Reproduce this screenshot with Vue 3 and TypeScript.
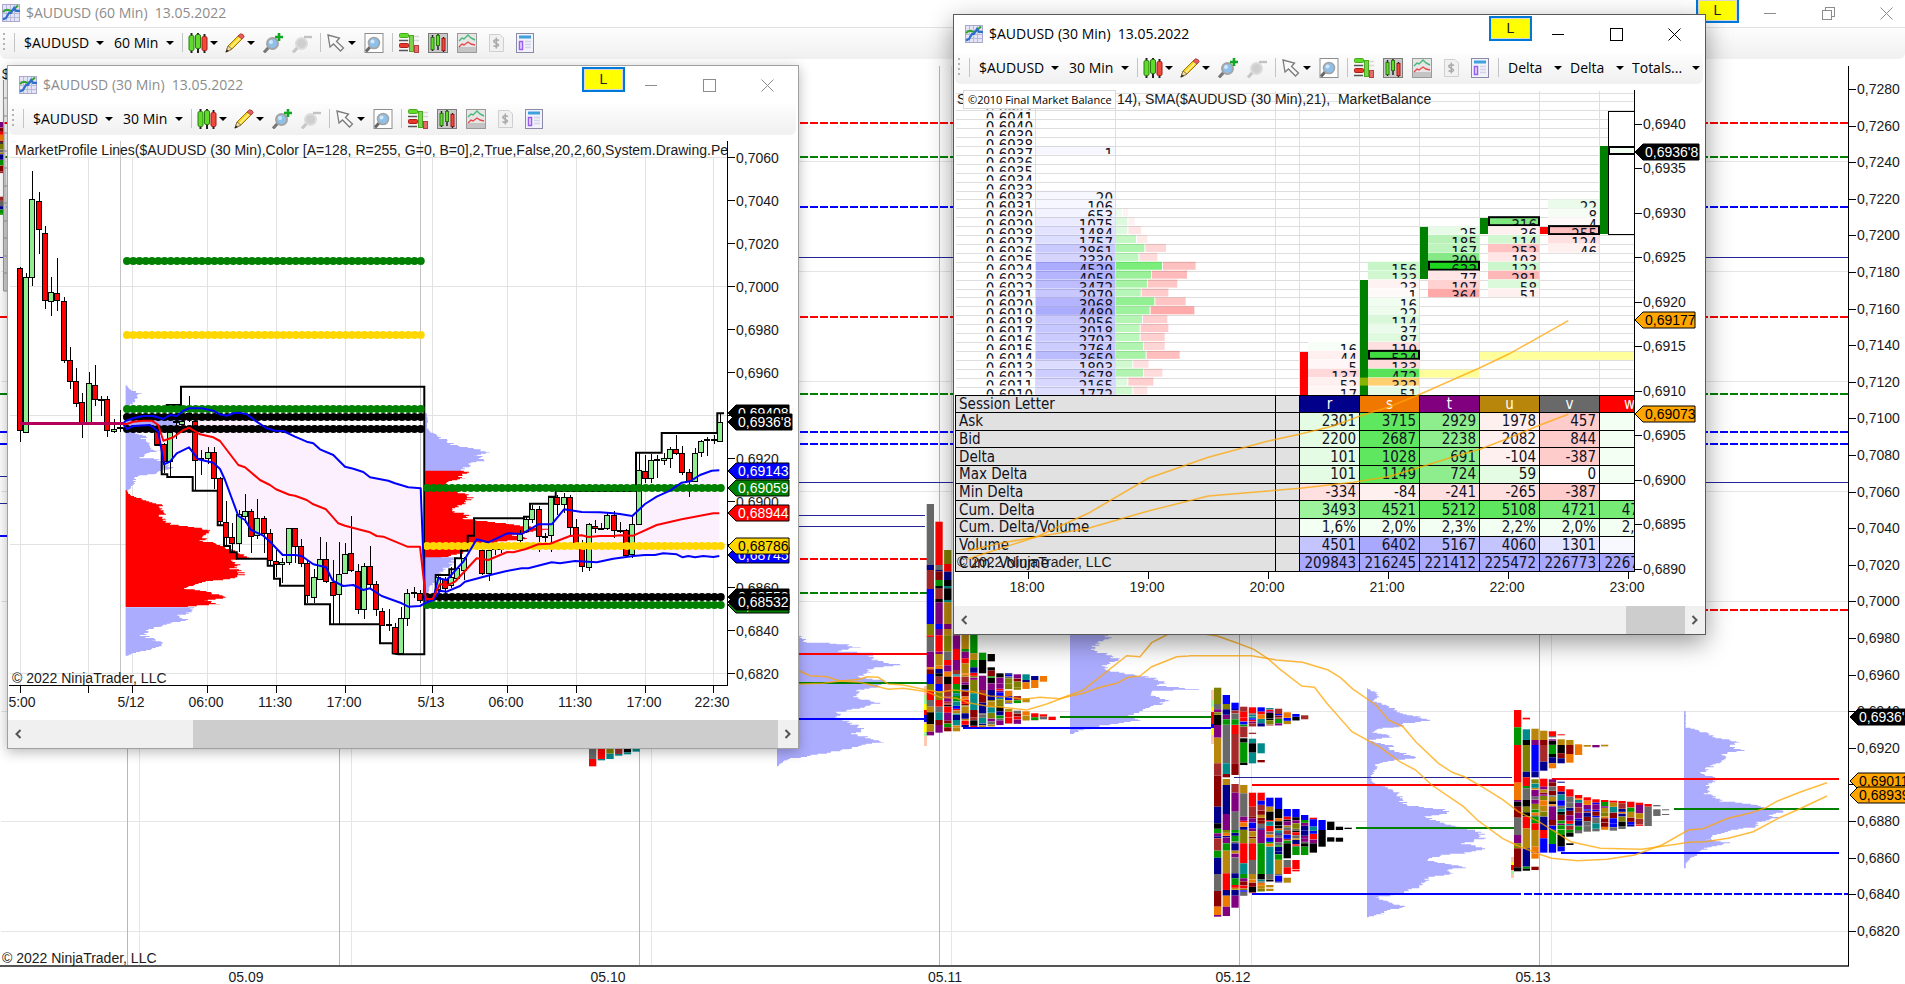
<script setup lang="ts">
type Pt = [number, number]
type Frame = [number, number, number, number]
interface Win { id: string; title: string; interval: string; active: boolean; extras: string[] }
interface Seg { x: number; y: number; h: number; c: string }
interface Tag { y: number; t: string; bg: string; fg: string; w: number; line: string }
interface Cell { x: number; y: number; t: string; c: string; box: boolean }

const windows: Win[] = [
  { id: 'main', title: '$AUDUSD (60 Min)\u00a0 13.05.2022', interval: '60 Min', active: false, extras: [] },
  { id: 'lines', title: '$AUDUSD (30 Min)\u00a0 13.05.2022', interval: '30 Min', active: false, extras: [] },
  { id: 'ladder', title: '$AUDUSD (30 Min)\u00a0 13.05.2022', interval: '30 Min', active: true, extras: ['Delta', 'Delta', 'Totals...'] },
]
const tools = [
  { k: 'candles', n: 'Chart style', caret: true }, { k: 'pencil', n: 'Drawing tools', caret: true },
  { k: 'zoomin', n: 'Zoom in' }, { k: 'zoomout', n: 'Zoom out' }, { k: 'sep', n: '' },
  { k: 'pointer', n: 'Cursor', caret: true }, { k: 'page', n: 'Zoom frame' }, { k: 'sep', n: '' },
  { k: 'dom', n: 'Chart trader' }, { k: 'box', n: 'Bars' }, { k: 'line', n: 'Indicators' },
  { k: 'dollar', n: 'Strategies' }, { k: 'panel', n: 'Properties' },
]

let seed = 7
function rnd(): number {
  seed = (seed * 1103515245 + 12345) % 2147483648
  return seed / 2147483648
}

/* Frames map plot units to page pixels: origin x, origin y, units per pixel in x and in y. */
const F: Record<string, Frame> = {
  mid: [760, 480, 3, 3],
  east: [1190, 630, 2.193, 3],
  s1: [0, 370, 3, 3],
  s0: [0, 130, 3, 3],
  s2: [400, 380, 3, 3],
  l1: [950, 220, 3, 3],
  l2: [1280, 220, 3, 3],
}
function at(f: Frame, x: number, y: number): Pt {
  return [Math.round((f[0] + x / f[2]) * 10) / 10, Math.round((f[1] + y / f[3]) * 10) / 10]
}
function trace(f: Frame, v: number[]): Pt[] {
  const out: Pt[] = []
  for (let i = 0; i < v.length; i += 2) out.push(at(f, v[i], v[i + 1]))
  return out
}
function poly(p: Pt[]): string { return p.map(q => q.join(',')).join(' ') }

function profile(x0: number, f: Frame, v: number[], jitter = 4): string {
  const p = trace(f, v)
  let d = `M${x0} ${p[0][1]}`
  for (let i = 0; i < p.length - 1; i++) {
    const [ax, ay] = p[i], [bx, by] = p[i + 1]
    for (let y = ay; y < by; y += 1) {
      const w = ax + ((bx - ax) * (y - ay)) / (by - ay)
      const j = (rnd() - 0.5) * Math.min(jitter * 2, (w - x0) * 0.4)
      d += `H${Math.max(x0 + 1, w + j).toFixed(1)}V${(y + 1).toFixed(1)}`
    }
  }
  return d + `H${x0}Z`
}

const COL: Record<string, string> = {
  g: '#696969', r: '#ff0000', o: '#808000', n: '#00008b', b: '#0000ff', G: '#009600', k: '#000000',
  w: '#a52a2a', d: '#8b0000', p: '#800080', y: '#b8860b', t: '#008b8b', O: '#f07800',
}
const KEYS = Object.keys(COL)
function tpo(f: Frame, x0: number, cols: string[]): Seg[] {
  const out: Seg[] = []
  cols.forEach((c, i) => {
    const tok = c.split(' ')
    const x = x0 + i * 8.7
    let y = Number(tok[0])
    for (const t of tok.slice(1)) {
      const end = Number(t.slice(1))
      const k = t[0]
      if (k === '*') {
        while (y < end) {
          const h = Math.min(end - y, 5 + Math.floor(rnd() * 4) * 4)
          out.push({ x, y: at(f, 0, y)[1], h: h / 3 - 0.2, c: COL[KEYS[Math.floor(rnd() * KEYS.length)]] })
          y += h
        }
      } else if (k !== '-') {
        out.push({ x, y: at(f, 0, y)[1], h: (end - y) / 3, c: COL[k] })
      }
      y = end
    }
  })
  return out
}

/* ---------- 60 minute chart ---------- */
const mainPrices = Array.from({ length: 24 }, (_, i) => ({ y: 89 + i * 36.6, t: '0,' + (7280 - i * 20) }))
const mainDays = [{ x: 246, t: '05.09' }, { x: 608, t: '05.10' }, { x: 945, t: '05.11' }, { x: 1233, t: '05.12' }, { x: 1533, t: '05.13' }]
const mainRows = [161, 271, 381, 491, 601, 711, 821, 931]
const mainCols = [127, 339, 639, 939, 1239, 1539]
const RED = '#ff0000', GRN = '#008000', BLU = '#0000ff', NAV = '#24249a'
const levels = [
  { y: 123, a: 0, b: 1848, c: RED, d: 1 }, { y: 157, a: 0, b: 1848, c: GRN, d: 1 }, { y: 207, a: 0, b: 1848, c: BLU, d: 1 },
  { y: 257, a: 0, b: 1848, c: NAV, d: 2 }, { y: 317, a: 0, b: 1848, c: RED, d: 1 }, { y: 394, a: 0, b: 1848, c: GRN, d: 1 },
  { y: 432, a: 0, b: 1848, c: BLU, d: 1 }, { y: 444, a: 0, b: 1848, c: BLU, d: 1 }, { y: 482, a: 700, b: 1848, c: NAV, d: 2 },
  { y: 476, a: 0, b: 20, c: NAV, d: 2 }, { y: 503, a: 0, b: 20, c: NAV, d: 2 }, { y: 536, a: 0, b: 20, c: BLU, d: 1 },
  { y: 515, a: 700, b: 925, c: NAV, d: 2 }, { y: 526, a: 700, b: 925, c: NAV, d: 2 },
  { y: 559, a: 700, b: 927, c: RED, d: 1 }, { y: 593, a: 700, b: 927, c: GRN, d: 1 }, { y: 610, a: 1600, b: 1848, c: RED, d: 1 },
  { y: 654, a: 700, b: 927, c: RED, d: 0 }, { y: 683, a: 700, b: 927, c: GRN, d: 0 }, { y: 719, a: 700, b: 927, c: BLU, d: 0 },
  { y: 717, a: 1060, b: 1213, c: GRN, d: 0 }, { y: 728, a: 963, b: 1213, c: BLU, d: 0 },
  { y: 777, a: 1234, b: 1512, c: NAV, d: 2 }, { y: 785, a: 1252, b: 1515, c: RED, d: 0 }, { y: 828, a: 1356, b: 1515, c: GRN, d: 0 },
  { y: 894, a: 1252, b: 1521, c: BLU, d: 0 }, { y: 894, a: 1524, b: 1848, c: BLU, d: 1 },
  { y: 779, a: 1552, b: 1839, c: RED, d: 0 }, { y: 809, a: 1674, b: 1839, c: GRN, d: 0 }, { y: 853, a: 1561, b: 1839, c: BLU, d: 0 },
]
const mainProfiles = [
  profile(777, F.mid, [122, 468, 130, 485, 240, 490, 290, 500, 245, 512, 330, 518, 345, 540, 420, 553, 335, 562, 330, 575, 290, 590, 380, 600, 350, 620, 300, 628, 290, 650, 350, 668, 310, 680, 240, 695, 230, 710, 260, 722, 290, 735, 310, 748, 285, 760, 360, 785, 300, 795, 260, 805, 210, 815, 150, 825, 90, 835, 60, 850, 54, 858]),
  profile(1070, F.mid, [1000, 430, 1050, 475, 1010, 485, 1000, 510, 1035, 520, 1060, 532, 1085, 540, 1040, 550, 1035, 565, 1060, 572, 1100, 580, 1165, 590, 1200, 598, 1215, 608, 1200, 615, 1305, 626, 1185, 632, 1170, 645, 1225, 658, 1200, 672, 1145, 690, 1110, 703, 1130, 720, 1060, 730, 1010, 737, 1000, 742, 960, 750, 935, 762]),
  profile(1367, F.east, [390, 175, 412, 190, 415, 200, 400, 212, 425, 222, 450, 235, 470, 250, 500, 260, 520, 270, 470, 280, 455, 290, 410, 295, 400, 305, 425, 310, 440, 320, 390, 330, 440, 345, 445, 360, 480, 375, 490, 383, 440, 390, 410, 400, 405, 420, 395, 440, 405, 460, 440, 475, 460, 490, 460, 510, 480, 525, 560, 537, 560, 550, 520, 558, 545, 575, 600, 590, 640, 605, 640, 625, 600, 640, 645, 655, 600, 668, 545, 675, 520, 690, 560, 700, 605, 712, 560, 718, 580, 728, 520, 740, 515, 760, 490, 775, 470, 790, 410, 800, 430, 815, 470, 828, 440, 840, 420, 850, 388, 860]),
  profile(1684, F.east, [1087, 243, 1087, 290, 1110, 298, 1140, 310, 1160, 325, 1210, 335, 1180, 345, 1215, 360, 1170, 370, 1180, 385, 1150, 400, 1130, 420, 1125, 432, 1160, 445, 1130, 462, 1145, 475, 1130, 490, 1150, 500, 1170, 512, 1240, 522, 1270, 532, 1310, 542, 1270, 555, 1290, 562, 1250, 572, 1235, 590, 1190, 600, 1150, 612, 1140, 625, 1180, 637, 1140, 650, 1120, 662, 1110, 675, 1095, 688, 1087, 700, 1087, 715]),
]
const letters: Seg[] = [
  ...tpo(F.mid, 926.7, [
    '72 g255 n270 w327 b432 o466 r471 g515 p562 O568 d582 b612 o632 r660 g680 y697 k733 y755 p766',
    '125 r255 g270 n274 d300 G318 k326 w357 k367 p432 b447 p466 r515 p522 y557 O567 n580 k590 w612 b634 o660 r680 g697 t720 d735 p758',
    '210 o252 r275 n300 k318 t325 k360 t367 y432 p447 y466 o515 g540 r556 p575 O590 k612 w650 p665 *680 r698 p722 *742 d754',
    '455 y466 p507 r540 p570 *590 r612 G640 t648 *705 n720 *742 y754',
    '440 y507 G515 p535 r550 y580 *615 k628 *680 y700 *742',
    '440 G520 y540 G562 *600 o640 t690 d712 *742',
    '518 G540 k580 -587 p630 w640 d668 n700 *742',
    '522 k544 -562 k572 *610 p630 n660 *740',
    '580 *658 o672 *736',
    '580 *628 -632 O648 *672 -687 *732',
    '583 *630 -648 *670 -692 *732',
    '583 t600 n607 O627 -655 y667 -694 *722',
    '588 n600 O624 -700 r712 *722',
    '588 O605 -703 r710 g718',
    '710 r720',
  ]),
  ...tpo(F.east, 1214, [
    '173 o222 g238 *255 k285 p323 y400 w437 d530 n580 *625 w662 G683 n732 g783 d830 O855 p860',
    '195 b222 o238 *285 g400 t432 d442 -447 y465 n552 p600 *640 G662 y730 r780 n797 O830 p858',
    '218 b237 *285 r312 w400 d435 -462 w488 p545 g600 *640 n662 *683 g730 n745 G765 *780 n797 p833',
    '230 w245 *290 w322 -325 k338 G398 k405 -465 y490 g560 *600 o640 r700 t732 G745 *798',
    '232 r250 *290 -308 w312 -326 t340 k368 t400 -488 r530 w560 *640 r690 g732 *790',
    '232 b245 *290 -340 t370 -390 d397 -488 r512 *600 p640 G732 *785',
    '234 *287 -503 b530 y545 k570 *650 t732 *755 -765 y772 -776 y783',
    '236 w252 *287 -503 b537 k565 *690 y732 *758',
    '247 *283 -537 b560 *640 k685 -690 g712 r732 -743 y758',
    '252 *272 -537 b562 *650 G675 -690 r718 -720 r724',
    '256 w268 -555 b570 *640 k650 G675',
    '563 r568 b590 *640 k668',
    '570 b600 k650',
    '575 k600 -622 k635',
    '590 k600 -623 k635',
    '593 k597',
  ]),
  ...tpo(F.east, 1514, [
    '240 r292 G345 r458 O510 p515 k530 d563 g615 p640 o655 d712 k724',
    '263 r268 -298 t330 k345 o425 n442 r468 G475 g510 k530 *560 r595 y655 n710 G716 k722',
    '296 y330 p345 b425 n442 -448 *480 p500 *560 G580 r600 y650 *670 O686 -710 d720',
    '302 y330 d345 w395 n422 -446 r470 *560 n600 r625 b668',
    '304 r318 g322 -328 *345 G372 k382 n400 O415 -448 *530 p570 *600 G642 b668',
    '313 r316 -328 y345 k370 d385 n400 -455 n458 -468 r485 *600 G615 k650 b664',
    '330 y345 d372 O398 -478 r500 *600 G608 k620 -640 k645',
    '343 O375 -495 r505 *590 G600 g610',
    '345 y350 -502 r512 *590 g605',
    '345 p352 -508 r518 *597 g604',
    '344 y349 -510 r516 *600',
    '512 r518 *592 g602',
    '513 r520 *575 k588 g597',
    '515 r528 *590',
    '518 r525 p550 *588',
    '522 r530 g588',
    '525 g529 -538 g558',
    '538 g541 -552 g555',
  ]),
  ...tpo([0, 749, 3, 3], 589, ['-20 g30 r52', '-20 r30 t34', '-20 o14 t30', '-20 w15 t20', '-20 k10 t16', '-20 t8']),
]
const scraps: Seg[] = tpo(F.s0, -4, ['-24 *130']).concat(tpo(F.s0, -4, ['200 *255']))
const zones = [
  [924, 686, 60, '#ffc8b0'], [924, 695, 10, '#98fb98'], [924, 704, 6, '#ffff00'], [924, 710, 5, RED], [924, 715, 7, BLU], [924, 724, 8, '#ffff00'], [924, 732, 4, '#98fb98'],
  [1211, 690, 54, '#ffc8b0'], [1211, 700, 8, '#98fb98'], [1211, 707, 4, '#ffff00'], [1211, 712, 12, RED], [1211, 724, 6, BLU], [1211, 728, 7, '#ffff00'],
  [1511, 857, 21, '#ffc8b0'], [1511, 862, 4, '#ffff00'], [1511, 865, 5, RED], [1511, 871, 3, '#98fb98'],
] as [number, number, number, string][]
const mainAverages = [
  poly([...trace(F.mid, [100, 565, 150, 587, 200, 590, 240, 603, 300, 598, 320, 590, 355, 592, 385, 612, 430, 615, 500, 630, 540, 637, 580, 630, 640, 635, 690, 648, 740, 650, 790, 658, 840, 652, 900, 656, 930, 645, 970, 630, 1100, 527, 1140, 530, 1175, 488, 1225, 462]),
    ...trace(F.east, [0, 6, 20, 10, 60, 18, 105, 40, 140, 58, 170, 85, 195, 115, 245, 168, 273, 172, 300, 220, 355, 305, 415, 350, 460, 395, 495, 420, 530, 465, 600, 530, 630, 570, 685, 625, 715, 645, 765, 672, 793, 685, 850, 692, 915, 688, 975, 675, 1035, 645, 1093, 600, 1125, 596, 1180, 565, 1230, 548, 1260, 535, 1290, 512, 1340, 485, 1397, 458])]),
  poly([...trace(F.mid, [100, 613, 190, 610, 240, 603, 300, 607, 385, 628, 430, 625, 500, 635, 540, 652, 590, 655, 625, 668, 680, 678, 740, 683, 800, 690, 860, 672, 910, 653, 970, 640, 1020, 622, 1070, 610, 1105, 592, 1140, 588, 1175, 560, 1250, 530, 1285, 528]),
    ...trace(F.east, [0, 77, 135, 77, 190, 90, 247, 97, 303, 120, 330, 143, 358, 178, 408, 225, 435, 270, 467, 290, 495, 335, 545, 400, 575, 427, 603, 441, 640, 470, 685, 508, 720, 545, 765, 575, 800, 605, 835, 635, 900, 655, 990, 658, 1040, 648, 1095, 637, 1130, 635, 1180, 625, 1235, 605, 1290, 565, 1340, 535, 1397, 498])]),
]
const mainTags: Tag[] = [
  { y: 717, t: "0,6936'8", bg: '#000', fg: '#fff', w: 66, line: '#000' },
  { y: 781, t: '0,69011', bg: '#ffa500', fg: '#000', w: 62, line: '#000' },
  { y: 795, t: '0,68939', bg: '#ffa500', fg: '#000', w: 62, line: '#000' },
]
function tagShape(x: number, t: Tag): string {
  return `M${x} ${t.y}l8 -8H${x + t.w}V${t.y + 8}H${x + 8}Z`
}

/* ---------- 30 minute chart with profile lines ---------- */
const linePrices = Array.from({ length: 13 }, (_, i) => ({ y: 157.5 + i * 43, t: '0,' + (7060 - i * 20) }))
const lineTimes = [[22, '5:00', 20], [88, '', 88], [131, '5/12', 132], [206, '06:00', 207], [275, '11:30', 276], [344, '17:00', 345], [431, '5/13', 432], [506, '06:00', 507], [575, '11:30', 576], [644, '17:00', 645], [712, '22:30', 713]] as [number, string, number][]
const dotLines = [
  { y: 261, a: 127, b: 421, c: '#008000' }, { y: 335, a: 127, b: 421, c: '#ffd700' },
  { y: 417, a: 127, b: 421, c: '#000' }, { y: 429, a: 127, b: 421, c: '#000' }, { y: 409, a: 127, b: 421, c: '#008000' },
  { y: 597, a: 427, b: 721, c: '#000' }, { y: 605, a: 427, b: 721, c: '#008000' },
  { y: 488, a: 427, b: 721, c: '#008000' }, { y: 546, a: 427, b: 721, c: '#ffd700' },
]
const lineProfiles = [
  { c: '#acacff', d: profile(125.6, F.s1, [380, 46, 395, 60, 417, 68, 412, 85, 400, 97, 388, 105, 385, 110, 400, 138, 540, 150, 535, 172, 400, 185, 430, 195, 435, 212, 450, 230, 470, 240, 430, 255, 425, 262, 470, 267, 490, 275, 500, 285, 525, 293, 485, 300, 455, 310, 415, 315, 405, 330, 395, 350, 382, 360]) },
  { c: '#ff0000', d: profile(125.6, F.s1, [380, 360, 390, 375, 430, 385, 475, 400, 480, 415, 490, 425, 480, 440, 500, 455, 530, 465, 575, 470, 630, 478, 620, 490, 610, 510, 650, 522, 680, 535, 720, 550, 745, 560, 700, 570, 715, 580, 700, 595, 728, 607, 715, 622, 640, 630, 580, 645, 560, 655, 610, 660, 640, 670, 680, 680, 625, 690, 650, 700, 570, 708, 555, 711]) },
  { c: '#acacff', d: profile(125.6, F.s1, [580, 712, 565, 725, 540, 735, 560, 750, 520, 755, 480, 768, 440, 780, 430, 795, 460, 808, 490, 820, 480, 828, 430, 840, 400, 848, 380, 857]) },
  { c: '#acacff', d: profile(425.2, F.s2, [80, 100, 83, 120, 80, 140, 92, 155, 110, 165, 145, 183, 170, 198, 235, 205, 260, 215, 230, 225, 255, 238, 215, 250, 200, 262, 190, 272]) },
  { c: '#ff0000', d: profile(425.2, F.s2, [190, 272, 210, 275, 180, 285, 190, 292, 165, 300, 140, 310, 165, 325, 190, 340, 212, 352, 195, 370, 150, 385, 170, 395, 210, 405, 180, 415, 230, 420, 320, 430, 390, 440, 450, 446, 380, 455, 340, 465, 385, 475, 280, 485, 270, 495, 190, 500, 200, 515, 160, 525, 130, 532]) },
  { c: '#acacff', d: profile(425.2, F.s2, [165, 532, 160, 545, 140, 560, 120, 580, 105, 600, 90, 620, 82, 640]) },
]
const upper1 = trace(F.s1, [60, 160, 370, 160, 378, 152, 400, 145, 430, 138, 460, 138, 490, 147, 510, 135, 530, 138, 550, 122, 568, 115, 605, 115, 640, 122, 660, 133, 680, 137, 700, 130, 718, 128, 740, 133, 770, 155, 800, 175, 825, 182, 850, 183, 885, 200, 920, 215, 940, 220, 960, 238, 1000, 255, 1035, 290, 1060, 296, 1090, 306, 1110, 322, 1165, 332, 1185, 340, 1225, 352, 1262, 355, 1275, 690])
const upper2 = trace(F.s2, [75, 660, 100, 655, 115, 595, 140, 600, 190, 545, 230, 478, 265, 487, 322, 460, 365, 462, 415, 433, 455, 433, 492, 388, 545, 396, 600, 397, 640, 400, 660, 402, 697, 408, 735, 372, 770, 350, 810, 332, 845, 308, 870, 304, 900, 285, 935, 272, 958, 271])
const lower1 = trace(F.s1, [370, 162, 380, 177, 400, 168, 450, 165, 475, 185, 492, 283, 510, 275, 530, 250, 567, 232, 595, 268, 640, 278, 660, 297, 675, 330, 715, 438, 735, 450, 753, 480, 790, 497, 810, 515, 848, 555, 885, 555, 905, 558, 940, 583, 978, 592, 998, 632, 1030, 648, 1060, 645, 1090, 660, 1110, 655, 1145, 678, 1205, 700, 1225, 710, 1260, 708])
const lower2 = trace(F.s2, [78, 668, 100, 660, 120, 632, 140, 635, 180, 618, 195, 605, 240, 593, 280, 583, 320, 573, 365, 565, 385, 565, 455, 547, 480, 550, 525, 543, 590, 547, 640, 536, 700, 528, 735, 525, 765, 525, 790, 520, 830, 523, 848, 532, 865, 528, 885, 532, 910, 528, 940, 531, 958, 528])
const middle = poly([...trace(F.s1, [60, 160, 380, 162, 400, 155, 430, 152, 455, 152, 475, 165, 490, 212, 520, 202, 550, 180, 567, 173, 600, 193, 640, 202, 660, 213, 715, 285, 735, 292, 780, 330, 810, 345, 828, 358, 868, 374, 885, 377, 920, 390, 940, 403, 978, 418, 1015, 460, 1035, 467, 1075, 478, 1110, 487, 1130, 498, 1150, 500, 1222, 530, 1260, 530, 1278, 690]),
  ...trace(F.s2, [80, 657, 98, 657, 120, 612, 140, 617, 165, 605, 230, 535, 265, 540, 322, 516, 340, 517, 375, 508, 415, 493, 450, 491, 510, 468, 545, 466, 565, 471, 600, 468, 640, 468, 660, 466, 700, 467, 770, 435, 845, 418, 940, 400, 958, 400])])
const upperLine = poly([...upper1, ...upper2])
const lowerLine = poly([...lower1, ...lower2])
const band = poly([...upper1.slice(1), ...upper2, ...[...lower1, ...lower2].reverse()])
const steps = [
  poly(trace(F.s1, [500, 125, 500, 105, 543, 105, 543, 50, 1273, 50, 1273, 853, 1195, 853, 1178, 850, 1178, 820, 1140, 820, 1140, 763, 990, 763, 990, 703, 915, 703, 915, 647, 840, 647, 840, 626, 822, 626, 822, 587, 803, 587, 803, 566, 710, 566, 710, 547, 690, 547, 690, 528, 672, 528, 672, 466, 653, 466, 653, 362, 578, 362, 578, 321, 502, 321, 502, 313, 485, 313, 485, 225, 466, 225, 466, 180])),
  poly(trace(F.s2, [75, 655, 100, 650, 107, 650, 107, 585, 148, 585, 148, 568, 165, 568, 165, 535, 183, 535, 183, 512, 203, 512, 203, 467, 222, 467, 222, 415, 372, 415, 372, 410, 390, 410, 390, 371, 447, 371, 447, 350, 467, 350, 467, 333, 708, 333, 708, 218, 785, 218, 785, 159, 952, 159, 952, 100, 972, 100])),
]
const U = 1, D = 0
function candles(f: Frame, v: number[][]) {
  return v.map(([x, hi, a, b, lo, up]) => ({
    x: Math.round(f[0] + x / 3), hi: f[1] + hi / 3, lo: f[1] + lo / 3,
    y: Math.round(f[1] + a / 3), h: Math.max(1, Math.round((b - a) / 3)), up: up === U,
  }))
}
const bars = [
  ...candles(F.s0, [[60, 410, 415, 902, 937, D], [78, 428, 441, 905, 910, U], [97, 122, 208, 441, 468, U], [116, 185, 212, 296, 371, D], [134, 287, 310, 512, 536, D], [153, 440, 486, 512, 558, U], [172, 383, 490, 512, 544, D], [191, 500, 512, 690, 698, D], [209, 650, 690, 752, 776, D], [228, 713, 752, 817, 832, D], [247, 790, 817, 880, 923, D], [266, 725, 760, 880, 880, U], [285, 706, 764, 805, 828, D], [303, 797, 808, 809, 857, D], [322, 797, 808, 902, 922, D], [341, 868, 896, 902, 910, U], [360, 840, 890, 893, 905, D]]),
  ...candles(F.s1, [[472, 170, 180, 223, 225, D], [491, 220, 223, 275, 310, D], [510, 180, 187, 275, 318, U], [529, 150, 152, 155, 208, D], [545, 150, 152, 160, 160, U], [566, 77, 130, 133, 155, D], [585, 147, 152, 268, 362, D], [604, 240, 265, 268, 315, D], [623, 230, 247, 265, 282, U], [641, 230, 247, 325, 357, D], [660, 320, 325, 455, 466, D], [679, 392, 455, 501, 528, D], [697, 460, 501, 520, 545, D], [716, 420, 433, 520, 547, U], [735, 373, 423, 437, 458, U], [754, 418, 423, 497, 550, D], [772, 388, 445, 497, 507, U], [791, 437, 445, 490, 550, D], [810, 478, 490, 572, 585, D], [828, 540, 572, 580, 622, D], [847, 565, 577, 583, 640, U], [866, 475, 475, 577, 585, U], [885, 475, 475, 530, 580, D], [904, 507, 528, 580, 590, D], [922, 570, 580, 677, 700, D], [941, 598, 622, 682, 700, U], [960, 500, 568, 628, 630, U], [978, 515, 568, 635, 640, D], [998, 570, 635, 673, 763, D], [1016, 515, 613, 673, 763, U], [1035, 518, 553, 610, 612, U], [1054, 437, 550, 602, 605, D], [1073, 583, 602, 715, 733, D], [1091, 580, 587, 715, 747, U], [1110, 527, 587, 640, 655, D], [1129, 632, 643, 718, 738, D], [1147, 715, 722, 763, 765, D], [1166, 718, 763, 766, 783, D], [1185, 760, 772, 850, 853, D], [1203, 710, 745, 850, 852, U], [1222, 658, 670, 745, 768, U], [1241, 650, 666, 668, 685, D], [1260, 660, 670, 692, 700, D]]),
  ...candles(F.s2, [[115, 585, 590, 625, 640, U], [135, 590, 598, 625, 640, D], [153, 560, 590, 615, 625, U], [172, 560, 565, 595, 600, U], [191, 530, 535, 570, 600, U], [247, 505, 510, 580, 585, D], [266, 500, 510, 580, 603, U], [285, 495, 505, 508, 525, D], [303, 490, 505, 508, 520, D], [360, 450, 458, 480, 490, U], [378, 410, 418, 455, 460, U], [397, 375, 388, 418, 430, U], [416, 378, 388, 470, 515, D], [434, 460, 467, 470, 495, D], [453, 350, 352, 467, 515, U], [472, 345, 352, 373, 405, D], [491, 338, 352, 373, 400, U], [509, 345, 352, 441, 465, D], [528, 418, 441, 488, 490, D], [547, 480, 505, 560, 577, D], [566, 430, 433, 562, 573, U], [585, 420, 437, 444, 460, D], [603, 430, 443, 445, 447, D], [622, 400, 406, 444, 450, U], [641, 392, 406, 450, 475, D], [660, 427, 450, 453, 460, D], [679, 447, 449, 523, 527, D], [697, 410, 433, 523, 535, U], [716, 220, 271, 433, 435, U], [735, 225, 272, 293, 310, D], [753, 222, 241, 295, 310, U], [772, 225, 238, 241, 295, D], [791, 220, 235, 241, 255, U], [810, 200, 208, 235, 265, U], [829, 165, 208, 219, 225, D], [847, 198, 219, 275, 285, D], [866, 268, 275, 302, 352, D], [885, 205, 219, 302, 302, U], [904, 180, 182, 215, 232, U], [922, 172, 178, 181, 228, D], [941, 165, 178, 181, 193, D], [960, 100, 126, 182, 185, U]]),
]
const lineTags: Tag[] = [
  { y: 413, t: '0,69408', bg: '#000', fg: '#fff', w: 61, line: '#000' },
  { y: 422, t: "0,6936'8", bg: '#000', fg: '#fff', w: 64, line: '#000' },
  { y: 471, t: '0,69143', bg: '#0000ff', fg: '#fff', w: 61, line: '#000' },
  { y: 488, t: '0,69059', bg: '#008000', fg: '#fff', w: 61, line: '#000' },
  { y: 513, t: '0,68944', bg: '#ff0000', fg: '#fff', w: 61, line: '#000' },
  { y: 555, t: '0,68745', bg: '#0000ff', fg: '#fff', w: 61, line: '#000' },
  { y: 546, t: '0,68786', bg: '#ffd700', fg: '#000', w: 61, line: '#000' },
  { y: 597, t: '0,68553', bg: '#000', fg: '#fff', w: 61, line: '#000' },
  { y: 605, t: '0,68510', bg: '#008000', fg: '#fff', w: 61, line: '#000' },
  { y: 602, t: '0,68532', bg: '#000', fg: '#fff', w: 61, line: '#000' },
]

/* ---------- 30 minute ladder ---------- */
const STEP = 8.91
const rowTop = (p: number) => 119.2 + (6940 - p) * STEP
const ladderRows = Array.from({ length: 33 }, (_, i) => 6942 - i).map(p => ({ y: rowTop(p), t: '0,' + p }))
const ladderGrid = Array.from({ length: 35 }, (_, i) => Math.round(92.5 + i * STEP))
const ladderCols = [1035, 1115, 1275, 1299, 1359, 1419, 1479, 1539, 1599]
const volumes = ([[6937, 1, 0, 0], [6932, 20, 0, 0], [6931, 106, 0, 0], [6930, 653, 516, 534], [6929, 1075, 532, 554], [6928, 1484, 532, 573], [6927, 1757, 558, 592], [6926, 2861, 583, 648], [6925, 2330, 565, 622], [6924, 4529, 636, 737], [6923, 4050, 603, 711], [6922, 3472, 591, 682], [6921, 2979, 572, 655], [6920, 3968, 613, 707], [6919, 4489, 599, 733], [6918, 2956, 576, 652], [6917, 3018, 569, 655], [6916, 2792, 569, 644], [6915, 2764, 579, 644], [6914, 3650, 587, 689], [6913, 1893, 547, 596], [6912, 2678, 579, 637], [6911, 2165, 532, 610], [6910, 1772, 547, 592]] as number[][])
  .map(([p, v, g, r]) => ({
    y: rowTop(p), t: String(v), a: Math.max(0.03, (0.33 * v) / 4529),
    g: g ? (g - 498) / 3 : 0, r: r ? (r - g) / 3 : 0,
    ga: (0.52 * (g - 498)) / 138, ra: (0.33 * (r - g)) / 134,
  }))
function cells(x: number, v: [number, number, number][], poc: number): Cell[] {
  return v.map(([p, n, s]) => ({
    x, y: rowTop(p), t: String(n), box: p === poc,
    c: s > 0 ? `rgba(0,210,0,${s / 100})` : `rgba(255,0,0,${-s / 100})`,
  }))
}
const prints: Cell[] = [
  ...cells(1299, [[6915, 16, 3], [6914, 44, -6], [6913, 5, -3], [6912, 137, -15], [6911, 52, -6], [6910, 17, -4]], 0),
  ...cells(1359, [[6924, 156, 22], [6923, 133, 18], [6922, 23, -5], [6921, 1, -2], [6920, 16, 5], [6919, 22, 7], [6918, 114, 15], [6917, 37, 8], [6916, 87, 12], [6915, 119, -12], [6914, 534, 75], [6913, 133, -14], [6912, 472, 65], [6911, 332, 0], [6910, 51, 10]], 6914),
  ...cells(1419, [[6928, 25, 9], [6927, 185, 28], [6926, 167, 26], [6925, 300, 48], [6924, 633, 88], [6923, 77, -10], [6922, 107, -18], [6921, 364, -34]], 6924),
  ...cells(1479, [[6929, 316, 50], [6928, 36, -6], [6927, 114, 18], [6926, 252, -24], [6925, 103, -10], [6924, 122, 20], [6923, 281, -28], [6922, 58, 14], [6921, 51, -6]], 6929),
  ...cells(1539, [[6931, 22, 8], [6930, 8, 4], [6929, 4, -2], [6928, 255, -25], [6927, 124, -12], [6926, 46, -6]], 6928),
]
const moves = [
  { x: 1300, a: 352, b: 396, c: RED }, { x: 1360, a: 280, b: 396, c: GRN }, { x: 1420, a: 227, b: 279, c: GRN },
  { x: 1480, a: 218, b: 234, c: GRN }, { x: 1540, a: 227, b: 234, c: RED }, { x: 1600, a: 146, b: 234, c: GRN },
]
const ladderPrices = Array.from({ length: 11 }, (_, i) => ({ y: 123.5 + i * 44.55, t: '0,' + (6940 - i * 5) }))
const ladderTimes = [18, 19, 20, 21, 22, 23].map((h, i) => ({ x: 1028 + i * 120, t: h + ':00' }))
const ladderTags: Tag[] = [
  { y: 152, t: "0,6936'8", bg: '#000', fg: '#fff', w: 64, line: '#000' },
  { y: 320, t: '0,69177', bg: '#ffa500', fg: '#000', w: 60, line: '#000' },
  { y: 414, t: '0,69073', bg: '#ffa500', fg: '#000', w: 60, line: '#000' },
]
const ladderAverages = [
  poly([...trace(F.l1, [50, 1018, 260, 950, 415, 880, 595, 775, 775, 712, 955, 663, 1048, 643, 1150, 618]), ...trace(F.l2, [240, 588, 325, 562, 420, 523, 600, 443, 685, 403, 780, 350, 865, 302])]),
  poly([...trace(F.l1, [55, 992, 150, 970, 235, 955, 415, 925, 595, 873, 775, 828, 955, 813]), ...trace(F.l2, [60, 805, 220, 787, 325, 770, 420, 742, 520, 710, 600, 688, 685, 655, 780, 615, 865, 583])]),
]
const heads = [['r', 'navy'], ['s', 'orange'], ['t', 'purple'], ['u', 'gold'], ['v', 'gray'], ['w', 'red']]
const table: { n: string; v: [string, string][] }[] = [
  { n: 'Ask', v: [['2301', 'g1'], ['3715', 'g4'], ['2929', 'g3'], ['1978', 'r0'], ['457', 'r2'], ['8', 'g0']] },
  { n: 'Bid', v: [['2200', 'g1'], ['2687', 'g4'], ['2238', 'g3'], ['2082', 'r0'], ['844', 'r2'], ['6', 'g0']] },
  { n: 'Delta', v: [['101', 'g1'], ['1028', 'g4'], ['691', 'g3'], ['-104', 'r0'], ['-387', 'r2'], ['2', 'g0']] },
  { n: 'Max Delta', v: [['101', 'g1'], ['1149', 'g4'], ['724', 'g3'], ['59', 'g1'], ['0', ''], ['2', 'g0']] },
  { n: 'Min Delta', v: [['-334', 'r1'], ['-84', 'r0'], ['-241', 'r1'], ['-265', 'r1'], ['-387', 'r2'], ['0', '']] },
  { n: 'Cum. Delta', v: [['3493', 'g2'], ['4521', 'g5'], ['5212', 'g4'], ['5108', 'g4'], ['4721', 'g5'], ['4723', 'g5']] },
  { n: 'Cum. Delta/Volume', v: [['1,6%', 'g0'], ['2,0%', 'g0'], ['2,3%', 'g0'], ['2,2%', 'g0'], ['2,0%', 'g0'], ['2,1%', 'g0']] },
  { n: 'Volume', v: [['4501', 'b2'], ['6402', 'b4'], ['5167', 'b3'], ['4060', 'b2'], ['1301', 'b1'], ['14', 'b0']] },
  { n: 'Cum. Volume', v: [['209843', 'b4'], ['216245', 'b4'], ['221412', 'b4'], ['225472', 'b4'], ['226773', 'b4'], ['226787', 'b4']] },
]
</script>

<template>
  <main class="desktop">
    <section v-for="w in windows" :key="w.id" class="window" :class="[w.id, { active: w.active }]" :aria-label="w.title">
      <header class="titlebar">
        <svg class="app-icon" width="18" height="18" viewBox="0 0 18 18">
          <rect x="0.5" y="0.5" width="17" height="17" fill="#e4e4f4" stroke="#a9a9cf" />
          <path d="M4.5 1V17M8.5 1V17M12.5 1V17M1 5.500H17M1 9.500H17M1 13.500H17" stroke="#b9b9dc" />
          <path d="M1 8Q4 5 6 6T10 7L16 1.500" fill="none" stroke="#2fa52f" stroke-width="2.200" />
          <path d="M1 15.500L4 14L7 9L9 9L12 4L14 7H18" fill="none" stroke="#2c6fd0" stroke-width="2.200" />
        </svg>
        <h1>{{ w.title }}</h1>
        <button class="link-button" type="button" aria-label="Instrument link">L</button>
        <div class="caption">
          <button type="button" aria-label="Minimize"><svg width="13" height="13"><path d="M0 6.500H12" /></svg></button>
          <button type="button" aria-label="Maximize">
            <svg width="13" height="13">
              <path v-if="w.id === 'main'" d="M0.500 3.500H9.500V12.500H0.500ZM3.500 3V0.500H12.500V9.500H10" />
              <path v-else d="M0.500 0.500H12.500V12.500H0.500Z" />
            </svg>
          </button>
          <button type="button" aria-label="Close"><svg width="13" height="13"><path class="smooth" d="M0.500 0.500L12.500 12.500M12.500 0.500L0.500 12.500" /></svg></button>
        </div>
      </header>

      <div class="toolbar" role="toolbar">
        <i class="grip"></i><i class="sep"></i>
        <span class="pick symbol">
          <select aria-label="Instrument"><option>$AUDUSD</option></select>
          <svg class="caret" width="8" height="4"><path d="M0 0H8L4 4Z" /></svg>
        </span>
        <span class="pick interval">
          <select aria-label="Interval"><option>{{ w.interval }}</option></select>
          <svg class="caret" width="8" height="4"><path d="M0 0H8L4 4Z" /></svg>
        </span>
        <i class="sep"></i>
        <template v-for="(t, i) in tools" :key="i">
          <i v-if="t.k === 'sep'" class="sep"></i>
          <button v-else type="button" class="tool" :class="{ wide: t.caret }" :aria-label="t.n">
            <svg width="20" height="20" viewBox="0 0 20 20">
              <g v-if="t.k === 'candles'">
                <path d="M3.500 0V20M10 0V20M16.500 1V20" stroke="#222" stroke-width="2" />
                <rect x="1" y="2.500" width="5" height="15" rx="1.500" fill="#5fdc2a" stroke="#2c7a12" />
                <rect x="7.500" y="1.500" width="5" height="14" rx="1.500" fill="#5fdc2a" stroke="#2c7a12" />
                <rect x="14" y="3.500" width="5" height="14" rx="1.500" fill="#f04a3a" stroke="#a01818" />
              </g>
              <g v-else-if="t.k === 'pencil'">
                <path d="M1 19L3 13L14 2L18 5L7 16Z" fill="#f7d21e" stroke="#9a7a08" />
                <path d="M5 15L16 4" stroke="#fff3a0" stroke-width="1.500" />
                <path d="M13 3L15.500 0.800Q19 1 19.200 4L17 6Z" fill="#ea5a5a" stroke="#b04848" />
                <path d="M1 19L3 13L7 16Z" fill="#f3dcae" stroke="#8a7a50" />
                <path d="M0.500 19.500L1.800 16.500L4 18Z" fill="#222" />
              </g>
              <g v-else-if="t.k === 'zoomin'">
                <path d="M1 19.500L6 14" stroke="#777" stroke-width="3" />
                <circle cx="9.500" cy="10.500" r="5.500" fill="#8fc0ea" stroke="#a4a4a4" stroke-width="2" />
                <circle cx="8" cy="9" r="2" fill="#d2e8fa" />
                <path d="M16 0V8M12 4H20" stroke="#12a722" stroke-width="2.600" />
              </g>
              <g v-else-if="t.k === 'zoomout'">
                <path d="M1 19.500L6 14" stroke="#c6c6c6" stroke-width="3" />
                <circle cx="9.500" cy="10.500" r="5.500" fill="#cfcfcf" stroke="#dcdcdc" stroke-width="2" />
                <path d="M12 4H20" stroke="#c2c2c2" stroke-width="2.400" />
              </g>
              <g v-else-if="t.k === 'pointer'">
                <path d="M2 2L4 14L7.500 11L14.500 18L17.500 15L10.500 8.500L13.500 5Z" fill="#fafafa" stroke="#7c7c7c" stroke-width="1.300" />
              </g>
              <g v-else-if="t.k === 'page'">
                <rect x="1" y="0.500" width="18" height="19" fill="#fff" stroke="#8e8e8e" />
                <path d="M2 18.500L6 14" stroke="#666" stroke-width="3" />
                <circle cx="10" cy="10" r="5.500" fill="#8fc0ea" stroke="#a4a4a4" stroke-width="1.600" />
                <circle cx="8.500" cy="8.500" r="2" fill="#d2e8fa" />
              </g>
              <g v-else-if="t.k === 'dom'">
                <path d="M9 3.500H20M9 7.500H20M9 12.500H14" stroke="#d6d6d6" stroke-width="1.500" />
                <rect x="0.500" y="0.500" width="9" height="4" rx="1" fill="#5fdc2a" stroke="#4aa81e" />
                <rect x="0.500" y="10.500" width="9" height="4" rx="1" fill="#e8382c" stroke="#a82018" />
                <path d="M0 7.500H9M0 17.500H9" stroke="#555" stroke-width="1.300" />
                <rect x="10.500" y="2.500" width="4" height="16" fill="#7bd44c" stroke="#4aa81e" />
                <rect x="15.500" y="12.500" width="4" height="7" fill="#e86a6a" stroke="#b84040" />
              </g>
              <g v-else-if="t.k === 'box'">
                <rect x="0.500" y="0.500" width="19" height="19" fill="#c9c9c9" stroke="#7c7c7c" />
                <path d="M4.500 2V18M10 1V17M15.500 4V19" stroke="#222" stroke-width="1.500" />
                <rect x="3" y="4.500" width="3" height="12" fill="#5fdc2a" stroke="#2c7a12" />
                <rect x="8.500" y="2.500" width="3" height="10" fill="#5fdc2a" stroke="#2c7a12" />
                <rect x="14" y="5.500" width="3" height="12" fill="#f04a3a" stroke="#a01818" />
              </g>
              <g v-else-if="t.k === 'line'">
                <rect x="0.500" y="0.500" width="19" height="19" fill="#e6e6e6" stroke="#9a9a9a" />
                <rect x="1" y="14" width="18" height="5" fill="#c4c4c4" />
                <path d="M2 8L5 5L7 6L11 2L14 5L18 7" fill="none" stroke="#46b878" stroke-width="1.400" />
                <path d="M2 14L5 11L7 12L11 9L14 11L18 12" fill="none" stroke="#e84a4a" stroke-width="1.400" />
              </g>
              <g v-else-if="t.k === 'dollar'">
                <path d="M3.500 1.500H14L17.500 5V18.500H3.500Z" fill="#f1f1f1" stroke="#cfcfcf" />
                <path d="M13 7.500Q10.500 6 8.500 7.200T10 10.200T12 13T7.500 12.700M10.300 4.500V15.500" fill="none" stroke="#aaa" stroke-width="1.500" />
              </g>
              <g v-else>
                <rect x="1.500" y="0.500" width="17" height="19" fill="#f2f2fb" stroke="#8a8aa6" />
                <rect x="4" y="2.500" width="12" height="3" fill="#3ea0dc" />
                <rect x="4.500" y="8.500" width="3" height="8" fill="#efe6ff" stroke="#9a5cf0" stroke-width="1.500" />
                <path d="M10 8.500H16M10 11.500H16M10 14.500H16" stroke="#d4d4e6" stroke-width="1.300" />
              </g>
            </svg>
            <svg v-if="t.caret" class="caret" width="8" height="4"><path d="M0 0H8L4 4Z" /></svg>
          </button>
        </template>
        <template v-if="w.extras.length">
          <i class="sep"></i>
          <span v-for="(e, i) in w.extras" :key="i" class="pick extra" :class="{ long: e.length > 5 }">
            <select :aria-label="'Ladder mode ' + (i + 1)"><option>{{ e }}</option></select>
            <svg class="caret" width="8" height="4"><path d="M0 0H8L4 4Z" /></svg>
          </span>
        </template>
      </div>

      <!-- 60 minute chart -->
      <svg v-if="w.id === 'main'" class="chart" role="img" aria-label="60 minute market profile">
        <g transform="translate(0 -59)">
          <g class="crisp">
            <rect v-for="y in mainRows" :key="y" x="1" :y="y" width="1847" height="1" fill="#e6e6e6" />
            <g v-for="x in mainCols" :key="x">
              <rect :x="x + 12" y="66" width="1" height="900" fill="#e6e6e6" />
              <rect :x="x" y="66" width="1" height="900" fill="#b8b8b8" />
            </g>
          </g>
          <path v-for="(d, i) in mainProfiles" :key="i" :d="d" fill="#acacff" />
          <line v-for="(l, i) in levels" :key="'l' + i" :x1="l.a" :x2="l.b" :y1="l.y" :y2="l.y" :stroke="l.c"
            :stroke-width="l.d === 2 ? 1 : 2" :stroke-dasharray="l.d === 1 ? '8 2' : undefined" class="crisp" />
          <rect v-for="(z, i) in zones" :key="'z' + i" :x="z[0]" :y="z[1]" width="3" :height="z[2]" :fill="z[3]" />
          <rect v-for="(s, i) in letters" :key="'s' + i" :x="s.x" :y="s.y" width="7.300" :height="s.h" :fill="s.c" />
          <rect v-for="(s, i) in scraps" :key="'q' + i" :x="s.x" :y="s.y" width="7" :height="s.h" :fill="s.c" />
          <path d="M3.500 80V291H9M3.500 98H9M3.500 116H9M3.500 133H9M3.500 151H9M3.500 168H9M3.500 186H9M3.500 203H9M3.500 221H9M3.500 238H9M3.500 256H9M3.500 273H9" fill="#d0d0d0" stroke="#999" />
          <text x="2" y="79">$AUDUSD</text>
          <polyline v-for="(p, i) in mainAverages" :key="'m' + i" :points="p" class="average" />
          <g class="crisp">
            <rect x="0" y="965" width="1849" height="2" fill="#555" />
            <rect x="1848" y="66" width="1" height="900" fill="#000" />
            <rect v-for="p in mainPrices" :key="p.t" x="1849" :y="p.y" width="7" height="1" fill="#000" />
          </g>
          <text v-for="p in mainPrices" :key="p.t" x="1857" :y="p.y + 5">{{ p.t }}</text>
          <text v-for="d in mainDays" :key="d.t" :x="d.x" y="982" text-anchor="middle">{{ d.t }}</text>
          <text x="2" y="963">© 2022 NinjaTrader, LLC</text>
          <g v-for="t in mainTags" :key="t.t">
            <path :d="tagShape(1850, t)" :fill="t.bg" :stroke="t.line" />
            <text x="1859" :y="t.y + 5" :style="{ fill: t.fg }">{{ t.t }}</text>
          </g>
        </g>
      </svg>

      <!-- 30 minute chart with profile lines -->
      <template v-else-if="w.id === 'lines'">
        <svg class="chart" role="img" aria-label="30 minute market profile lines">
          <g transform="translate(-8 -135)">
            <g class="crisp">
              <rect v-for="y in [157, 286, 415, 544, 673]" :key="y" x="10" :y="y" width="717" height="1" fill="#e2e2e2" />
              <rect v-for="t in lineTimes" :key="t[2]" :x="t[2]" y="157" width="1" height="528" fill="#e2e2e2" />
              <rect v-for="x in [120, 420]" :key="x" :x="x" y="141" width="1" height="544" fill="#c4c4c4" />
            </g>
            <polygon :points="band" fill="#fcf0ff" />
            <path v-for="(p, i) in lineProfiles" :key="i" :d="p.d" :fill="p.c" />
            <polyline v-for="(p, i) in steps" :key="'t' + i" :points="p" class="step" />
            <g v-for="(b, i) in bars" :key="'b' + i" class="crisp">
              <rect :x="b.x" :y="b.hi" width="1" :height="b.lo - b.hi" fill="#000" />
              <rect :x="b.x - 3" :y="b.y" width="6" :height="b.h + 1" fill="#000" />
              <rect v-if="b.h > 1" :x="b.x - 2" :y="b.y + 1" width="4" :height="b.h - 1" :fill="b.up ? '#90ee90' : '#ff0000'" />
            </g>
            <g v-for="(l, i) in dotLines" :key="'d' + i">
              <line :x1="l.a" :x2="l.b" :y1="l.y" :y2="l.y" :stroke="l.c" stroke-width="6" />
              <line :x1="l.a" :x2="l.b" :y1="l.y" :y2="l.y" :stroke="l.c" class="dots" />
            </g>
            <polyline :points="upperLine" class="curve blue" />
            <polyline :points="lowerLine" class="curve blue" />
            <polyline :points="middle" class="curve red" />
            <rect x="20" y="422" width="104" height="3" fill="#b4005c" />
            <text x="15" y="155">MarketProfile Lines($AUDUSD (30 Min),Color [A=128, R=255, G=0, B=0],2,True,False,20,2,60,System.Drawing.Pen</text>
            <rect x="728" y="136" width="80" height="580" fill="#fff" />
            <g class="crisp">
              <rect x="9" y="685" width="719" height="1" fill="#000" />
              <rect x="727" y="141" width="1" height="545" fill="#000" />
              <rect v-for="p in linePrices" :key="p.t" x="728" :y="p.y - 1" width="7" height="1" fill="#000" />
              <rect v-for="t in lineTimes" :key="'x' + t[2]" :x="t[2]" y="686" width="1" height="7" fill="#000" />
            </g>
            <text v-for="p in linePrices" :key="p.t" x="736" :y="p.y + 5">{{ p.t }}</text>
            <text v-for="t in lineTimes" :key="'y' + t[2]" :x="t[0]" y="707" text-anchor="middle">{{ t[1] }}</text>
            <text x="12" y="683">© 2022 NinjaTrader, LLC</text>
            <g v-for="t in lineTags" :key="t.t">
              <path :d="tagShape(728, t)" :fill="t.bg" :stroke="t.line" />
              <text x="738" :y="t.y + 5" :style="{ fill: t.fg }">{{ t.t }}</text>
            </g>
          </g>
        </svg>
        <div class="scrollbar">
          <button type="button" aria-label="Scroll left"><svg width="8" height="10"><path d="M6.500 1L2.500 5L6.500 9" /></svg></button>
          <div class="track"><div class="thumb"></div></div>
          <button type="button" aria-label="Scroll right"><svg width="8" height="10"><path d="M1.500 1L5.500 5L1.500 9" /></svg></button>
        </div>
      </template>

      <!-- 30 minute ladder -->
      <template v-else>
        <div class="pane">
          <div class="plot">
            <svg class="ladder" role="img" aria-label="Ladder">
              <g transform="translate(-954 -84)">
                <g class="crisp">
                  <rect v-for="y in ladderGrid" :key="y" x="956" :y="y" width="678" height="1" fill="#dedede" />
                  <rect v-for="x in ladderCols" :key="x" :x="x" y="91" width="1" height="305" fill="#dedede" />
                </g>
                <g v-for="(v, i) in volumes" :key="'v' + i">
                  <rect x="1036" :y="v.y" width="79" height="8.600" :fill="`rgba(0,0,255,${v.a})`" />
                  <rect x="1116" :y="v.y" :width="v.g" height="8" :fill="`rgba(0,220,0,${v.ga})`" />
                  <rect :x="1117 + v.g" :y="v.y" :width="Math.max(0, v.r - 1)" height="8" :fill="`rgba(255,0,0,${v.ra})`" />
                  <svg x="1036" :y="v.y" width="79" height="8"><text x="77" y="14" text-anchor="end" class="figure">{{ v.t }}</text></svg>
                </g>
                <svg v-for="r in ladderRows" :key="r.t" x="956" :y="r.y" width="79" height="8"><text x="77" y="14" text-anchor="end" class="figure">{{ r.t }}</text></svg>
                <rect v-for="m in moves" :key="m.x" :x="m.x" :y="m.a" width="8" :height="m.b - m.a" :fill="m.c" />
                <rect x="1420" :y="rowTop(6912) + 1" width="60" height="8" fill="#ffff9c" />
                <rect x="1480" :y="rowTop(6914) + 1" width="154" height="8" fill="#ffff9c" />
                <rect x="1360" :y="rowTop(6911)" width="8" height="8" fill="#86b400" />
                <rect x="1368" :y="rowTop(6911)" width="51" height="8" fill="#ffcf70" />
                <g v-for="(c, i) in prints" :key="'c' + i">
                  <rect v-if="c.t !== '332'" :x="c.x + 9" :y="c.y" width="51" height="8.600" fill="#fff" />
                  <rect :x="c.x + 9" :y="c.y" width="51" height="8.600" :fill="c.c" />
                  <svg :x="c.x + 9" :y="c.y" width="51" height="8"><text x="49" y="14" text-anchor="end" class="figure">{{ c.t }}</text></svg>
                  <rect v-if="c.box" :x="c.x + 10" :y="c.y" width="50" height="8" fill="none" stroke="#000" stroke-width="2" />
                </g>
                <rect x="1608.500" y="111.500" width="30" height="123" fill="#fff" stroke="#000" />
                <rect x="1609" y="147" width="30" height="7" fill="#f0fff0" stroke="#000" stroke-width="2" />
                <text x="957" y="104">S</text>
                <text x="1117" y="104">14), SMA($AUDUSD (30 Min),21),&nbsp; MarketBalance</text>
                <rect x="963.500" y="90.500" width="152" height="18" fill="#fff" stroke="#d8d8d8" />
                <text x="968" y="104" class="note">©2010 Final Market Balance</text>
              </g>
            </svg>
            <table>
              <colgroup><col class="c-name"><col class="c-gap"><col v-for="h in heads" :key="h[0]" class="c-val"></colgroup>
              <thead>
                <tr><th scope="row">Session Letter</th><td class="blank"></td><th v-for="h in heads" :key="h[0]" scope="col" :class="h[1]">{{ h[0] }}</th></tr>
              </thead>
              <tbody>
                <tr v-for="r in table" :key="r.n">
                  <th scope="row">{{ r.n }}</th><td class="blank"></td>
                  <td v-for="(c, i) in r.v" :key="i" :class="c[1]">{{ c[0] }}</td>
                </tr>
              </tbody>
            </table>
          </div>
          <svg class="overlay" role="img" aria-label="Averages, prices and times">
            <g transform="translate(-954 -84)">
              <polyline v-for="(p, i) in ladderAverages" :key="i" :points="p" class="average" />
              <text x="957" y="567">© 2022 NinjaTrader, LLC</text>
              <g class="crisp">
                <rect x="1634" y="90" width="1" height="482" fill="#000" />
                <rect v-for="p in ladderPrices" :key="p.t" x="1635" :y="p.y" width="7" height="1" fill="#000" />
                <rect v-for="t in ladderTimes" :key="t.t" :x="t.x" y="571" width="1" height="8" fill="#000" />
              </g>
              <text v-for="t in ladderTimes" :key="t.t" :x="t.x - 1" y="592" text-anchor="middle">{{ t.t }}</text>
              <text v-for="p in ladderPrices" :key="p.t" x="1643" :y="p.y + 5">{{ p.t }}</text>
              <g v-for="t in ladderTags" :key="t.t">
                <path :d="tagShape(1635, t)" :fill="t.bg" :stroke="t.line" />
                <text x="1645" :y="t.y + 5" :style="{ fill: t.fg }">{{ t.t }}</text>
              </g>
            </g>
          </svg>
        </div>
        <div class="scrollbar">
          <button type="button" aria-label="Scroll left"><svg width="8" height="10"><path d="M6.500 1L2.500 5L6.500 9" /></svg></button>
          <div class="track"><div class="thumb"></div></div>
          <button type="button" aria-label="Scroll right"><svg width="8" height="10"><path d="M1.500 1L5.500 5L1.500 9" /></svg></button>
        </div>
      </template>
    </section>
  </main>
</template>

<style>
body { overflow: hidden; background: #fff; }
</style>

<style scoped>
.desktop { position: relative; height: 100vh; overflow: hidden; font-family: "Open Sans", "Noto Sans", sans-serif; font-size: 14px; color: #000; }
.window { box-sizing: border-box; display: flex; flex-direction: column; background: #fff; }
.main { height: 100%; }
.lines { position: absolute; left: 7px; top: 65px; width: 792px; border: 1px solid #a0a0a0; box-shadow: 0 3px 12px rgba(0, 0, 0, 0.28); }
.ladder.window { position: absolute; left: 953px; top: 14px; width: 753px; border: 1px solid #5a5a5a; box-shadow: 0 8px 24px rgba(0, 0, 0, 0.4); }

.titlebar { display: flex; align-items: center; gap: 6px; height: 38px; padding-left: 11px; flex: none; color: #8c8c8c; }
.active .titlebar { color: #000; }
.main .titlebar { height: 28px; padding-left: 2px; border-bottom: 1px solid #e2e2e2; box-sizing: border-box; }
.titlebar h1 { flex: 1; margin: 0; padding-bottom: 2px; font-size: 14px; font-weight: 400; white-space: nowrap; }
.app-icon { margin-bottom: 1px; }
.link-button { align-self: flex-start; box-sizing: border-box; width: 43px; height: 25px; margin: 1px 0 0; padding: 0 0 2px; border: 2px solid #0078d7; box-shadow: inset 0 0 0 1px #d8d8d8; background: #ff0; font: 14px "Liberation Sans", Arial, sans-serif; color: #222; }
.main .link-button { margin: -2px 5px 0 0; }
.caption { display: flex; margin-left: -9px; padding-right: 2px; }
.main .caption { margin-right: -12px; }
.caption button { display: flex; align-items: center; justify-content: center; width: 58px; height: 26px; padding: 0; border: 0; background: none; color: inherit; }
.caption path { fill: none; stroke: currentColor; shape-rendering: crispEdges; }
.caption .smooth { shape-rendering: auto; }

.toolbar { display: flex; align-items: center; flex: none; box-sizing: border-box; height: 31px; margin: 0 2px 0 1px; padding-bottom: 2px; border-radius: 0 0 6px 6px; background: linear-gradient(#fdfdfd, #f0f0f0); }
.main .toolbar { margin: 0; }
.grip { width: 2px; height: 19px; margin: 0 5px 0 3px; background: repeating-linear-gradient(#b4b4b4 0 2px, transparent 2px 5px); }
.sep { width: 1px; height: 19px; margin: 0 1px 0 4px; background: #c4c4c4; }
.pick { display: flex; align-items: center; }
.pick select { appearance: none; padding: 0; border: 0; background: none; font: inherit; color: inherit; }
.symbol { margin-left: 8px; margin-right: 10px; }
.symbol select { width: 72px; }
.interval { margin-right: 4px; }
.interval select { width: 52px; }
.extra { margin-left: 8px; }
.extra select { width: 46px; }
.long select { width: 60px; }
.tool { display: flex; align-items: center; justify-content: center; width: 29px; height: 26px; padding: 0; border: 0; background: none; }
.wide { width: 37px; gap: 2px; }
.caret { flex: none; fill: #000; }

.chart { display: block; width: 100%; height: 585px; }
.main .chart { flex: 1; height: auto; min-height: 0; }
svg text { font-family: "Liberation Sans", Arial, sans-serif; font-size: 14px; fill: #1a1a1a; }
svg .figure { font-family: "DejaVu Sans Condensed", "DejaVu Sans", sans-serif; font-size: 15px; fill: #111122; }
svg .note { font-family: "Open Sans", sans-serif; font-size: 11px; fill: #000; }
.crisp { shape-rendering: crispEdges; }
.average { fill: none; stroke: #ffa500; stroke-opacity: 0.75; stroke-width: 1.5; }
.step { fill: none; stroke: #000; stroke-width: 2; }
.curve { fill: none; stroke-width: 2; stroke-linejoin: round; }
.blue { stroke: #0000ff; }
.curve.red { stroke: #ff0000; }
.dots { stroke-width: 8; stroke-linecap: round; stroke-dasharray: 0 6.25; }

.scrollbar { display: flex; flex: none; height: 28px; background: #f0f0f0; }
.scrollbar button { display: flex; align-items: center; justify-content: center; width: 20px; padding: 0; border: 0; background: none; }
.scrollbar path { fill: none; stroke: #555; stroke-width: 2; }
.track { display: flex; flex: 1; }
.thumb { width: 78%; margin-left: auto; background: #cdcdcd; }
.ladder .thumb { width: 59px; }

.pane { position: relative; height: 522px; overflow: hidden; }
.plot { width: 680px; overflow: hidden; }
.plot .ladder { display: block; width: 100%; height: 311px; }
.overlay { position: absolute; inset: 0; width: 100%; height: 100%; }
table { width: 704px; height: 177px; margin-left: 1px; border-collapse: collapse; table-layout: fixed; font-family: "DejaVu Sans Condensed", "DejaVu Sans", sans-serif; font-size: 15px; line-height: 15px; color: #111122; }
.c-name { width: 320px; }
.c-gap { width: 24px; }
.c-val { width: 60px; }
th, td { padding: 1px 3px 0; border: 1px solid #000; font-weight: 400; text-align: right; white-space: nowrap; }
th[scope="row"], .blank { background: #e1e1e1; text-align: left; }
th[scope="col"] { color: #fff; text-align: center; }
.navy { background: #00008b; }
.orange { background: #f07800; }
.purple { background: #800080; }
.gold { background: #b8860b; }
.gray { background: #696969; }
th.red { background: #ff0000; }
.g0 { background: #f4fff4; }
.g1 { background: #e3fce3; }
.g2 { background: #9df49d; }
.g3 { background: #8eee8e; }
.g4 { background: #5fe85f; }
.g5 { background: #76ec76; }
.r0 { background: #fff0f0; }
.r1 { background: #ffe0e0; }
.r2 { background: #ffcccc; }
.b0 { background: #f8f8ff; }
.b1 { background: #e4e4ff; }
.b2 { background: #c4c4ff; }
.b3 { background: #b8b8ff; }
.b4 { background: #a8a8ff; }
</style>
